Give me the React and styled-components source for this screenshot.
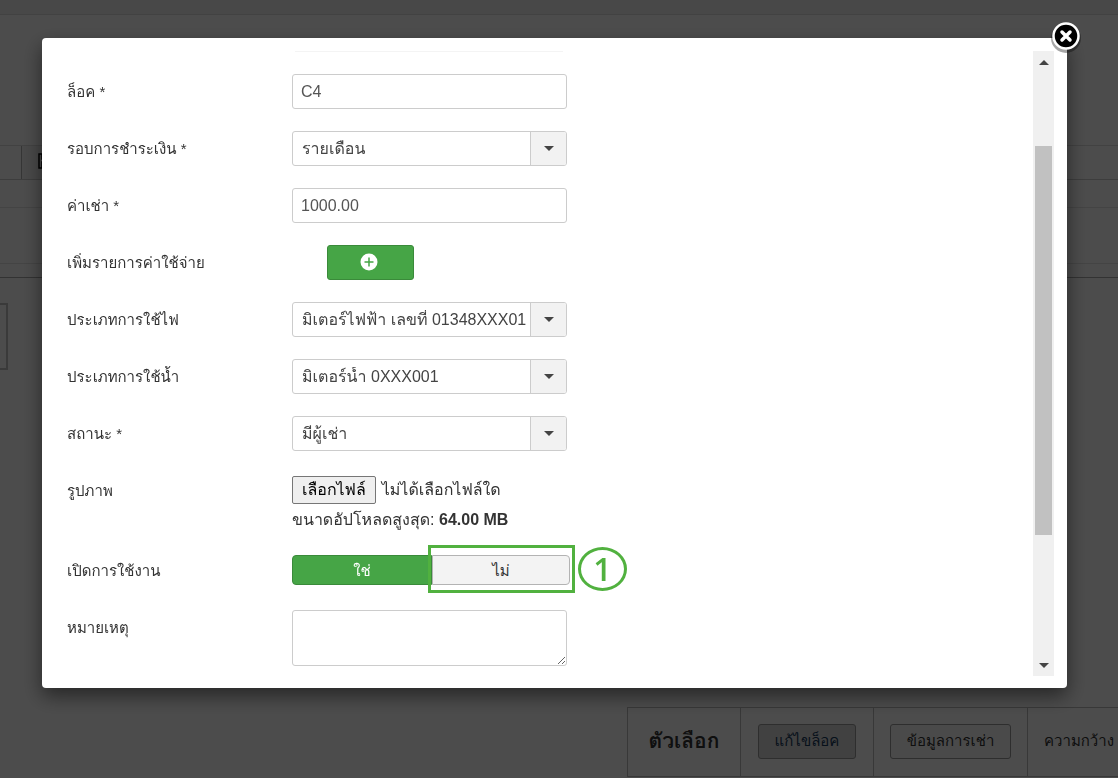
import React, { useState } from 'react';
import styled, { createGlobalStyle } from 'styled-components';

const GlobalStyle = createGlobalStyle`
  * {
    box-sizing: border-box;
  }
  body {
    margin: 0;
    overflow: hidden;
    background: #fff;
    color: #333;
    font-family: "Liberation Sans", Loma, Waree, Arial, sans-serif;
    font-size: 16px;
    line-height: 20px;
  }
  button, input, select, textarea {
    margin: 0;
    font: inherit;
  }
`;

/* ---- page behind the dialog ---- */

const Page = styled.div`
  display: flex;
  flex-direction: column;
  height: 100vh;
  overflow: hidden;
`;

const TopBar = styled.div`
  flex: none;
  height: 15px;
  background: #f0f0f0;
  border-bottom: 1px solid #ddd;
`;

const SearchBar = styled.div`
  display: flex;
  flex: none;
  height: 35px;
  margin-top: 130px;
  border-top: 1px solid #ddd;
  border-bottom: 1px solid #ccc;
`;

const SearchInput = styled.input`
  width: 21px;
  border: 0;
  padding: 0;
`;

const SaveButton = styled.button`
  width: 88px;
  padding: 0 0 4px 16px;
  border: 1px solid #b3b3b3;
  border-width: 0 1px;
  background: #f3f3f3;
  text-align: left;
  svg {
    display: block;
  }
`;

const Band = styled.div`
  flex: none;
  height: ${props => props.height}px;
  border-bottom: 1px solid ${props => (props.strong ? '#aaa' : '#e4e4e4')};
`;

const SidePanel = styled.div`
  flex: none;
  width: 8px;
  height: 67px;
  margin-top: 25px;
  border: 2px solid #c4c4c4;
  border-left: 0;
`;

const OptionTable = styled.table`
  width: 491px;
  height: 70px;
  margin: auto 0 1px auto;
  flex: none;
  table-layout: fixed;
  border-collapse: collapse;
  font-size: 15px;
  th, td {
    padding: 0 0 2px;
    border: 1px solid #bbb;
    text-align: center;
    white-space: nowrap;
  }
  th {
    width: 113px;
    font-size: 21px;
  }
  td:last-child {
    padding-left: 16px;
    border-right: 0;
    text-align: left;
  }
`;

const OptionButton = styled.button`
  height: 35px;
  padding: 0 16px;
  border: 1px solid #999;
  border-radius: 3px;
  background: ${props => (props.active ? '#d9d9d9' : '#f8f8f8')};
  color: ${props => (props.active ? '#1a3b5c' : '#333')};
`;

/* ---- dialog ---- */

const Overlay = styled.div`
  position: fixed;
  inset: 0;
  display: flex;
  padding: 38px 51px 90px 42px;
  background: rgba(0, 0, 0, 0.7);
`;

const Dialog = styled.div`
  position: relative;
  display: flex;
  flex: 1;
  padding: 13px 13px 12px 25px;
  border-radius: 4px;
  background: #fff;
  box-shadow: 0 8px 20px rgba(0, 0, 0, 0.5);
`;

const CloseButton = styled.button`
  position: absolute;
  top: -18px;
  right: -16px;
  width: 34px;
  height: 34px;
  padding: 0;
  border: 0;
  background: none;
  svg {
    display: block;
  }
`;

const Form = styled.form`
  display: flex;
  flex: 1;
  flex-direction: column;
  gap: 22px;
  min-width: 0;
  overflow: hidden;
`;

const FieldEnd = styled.div`
  flex: none;
  width: 268px;
  height: 1px;
  margin-left: 228px;
  background: #f4f4f4;
`;

const Row = styled.div`
  display: flex;
  flex: none;
  min-height: ${props => props.height || 35}px;
`;

const Label = styled.label`
  flex: none;
  width: 225px;
  padding-top: ${props => (props.compact ? 6 : 8)}px;
  font-size: 15px;
`;

const Control = styled.div`
  width: 275px;
`;

const TextInput = styled.input`
  display: block;
  width: 100%;
  height: 35px;
  padding: 0 8px;
  border: 1px solid #ccc;
  border-radius: 3px;
  background: #fff;
  color: #555;
`;

const SelectBox = styled.div`
  position: relative;
`;

const Select = styled.select`
  display: block;
  width: 100%;
  height: 35px;
  padding: 0 38px 0 9px;
  border: 1px solid #ccc;
  border-radius: 3px;
  background: #fff;
  color: #444;
  appearance: none;
`;

const SelectArrow = styled.span`
  position: absolute;
  top: 1px;
  right: 1px;
  bottom: 1px;
  display: flex;
  align-items: center;
  justify-content: center;
  width: 36px;
  border-left: 1px solid #ccc;
  border-radius: 0 2px 2px 0;
  background: #f2f2f2;
  pointer-events: none;
`;

const Caret = styled.span`
  border: 5px solid transparent;
  border-top-color: ${props => (props.up ? 'transparent' : '#444')};
  border-bottom-color: ${props => (props.up ? '#444' : 'transparent')};
  border-top-width: ${props => (props.up ? 0 : 5)}px;
  border-bottom-width: ${props => (props.up ? 5 : 0)}px;
`;

const AddButton = styled.button`
  display: flex;
  align-items: center;
  justify-content: center;
  width: 87px;
  height: 35px;
  margin-left: 35px;
  padding: 0 4px 2px 0;
  border: 1px solid #3a8a3a;
  border-radius: 3px;
  background: #46a546;
`;

const HiddenInput = styled.input`
  position: absolute;
  width: 1px;
  height: 1px;
  opacity: 0;
`;

const FileLine = styled.div`
  display: flex;
  align-items: center;
  gap: 6px;
  margin-top: 3px;
  white-space: nowrap;
`;

const FileButton = styled.label`
  height: 28px;
  padding: 3px 9px;
  border: 1px solid #767676;
  border-radius: 2px;
  background: #efefef;
  color: #000;
`;

const FileHint = styled.div`
  margin-top: 6px;
`;

const Switch = styled.div`
  display: flex;
  flex: none;
  align-items: flex-start;
  width: 278px;
`;

const SwitchOption = styled.label`
  flex: 1;
  height: 30px;
  padding-top: 5px;
  border: 1px solid ${props => (props.active ? '#3a8a3a' : '#b3b3b3')};
  border-radius: ${props => (props.active ? '4px 0 0 4px' : '0 4px 4px 0')};
  background: ${props => (props.active ? '#46a546' : '#f3f3f3')};
  color: ${props => (props.active ? '#fff' : '#333')};
  font-size: 15px;
  text-align: center;
`;

const NoOption = styled.div`
  position: relative;
  display: flex;
  flex: 1;
`;

const Highlight = styled.span`
  position: absolute;
  inset: -10px -5px -8px -4px;
  border: 3px solid #51b13f;
  pointer-events: none;
`;

const StepNumber = styled.span`
  position: absolute;
  top: -8px;
  left: calc(100% + 8px);
  width: 49px;
  height: 44px;
  border: 3px solid #51b13f;
  border-radius: 50%;
  color: #51b13f;
  font-family: "Open Sans", sans-serif;
  font-size: 32px;
  font-weight: 600;
  line-height: 38px;
  text-align: center;
`;

const Remark = styled.textarea`
  display: block;
  width: 100%;
  height: 56px;
  border: 1px solid #ccc;
  border-radius: 3px;
  background: #fff;
`;

const Scrollbar = styled.div`
  display: flex;
  flex: none;
  flex-direction: column;
  width: 21px;
  padding: 0 2px;
  background: #f0f0f0;
`;

const ScrollEnd = styled.div`
  display: flex;
  align-items: center;
  justify-content: center;
  height: 22px;
`;

const ScrollPart = styled.div`
  flex: ${props => props.size};
  background: ${props => (props.thumb ? '#c1c1c1' : 'transparent')};
`;

const SelectField = ({ id, label, options }) => (
  <Row>
    <Label htmlFor={id}>{label}</Label>
    <Control>
      <SelectBox>
        <Select id={id}>
          {options.map(option => (
            <option key={option}>{option}</option>
          ))}
        </Select>
        <SelectArrow>
          <Caret />
        </SelectArrow>
      </SelectBox>
    </Control>
  </Row>
);

const TextField = ({ id, label, value }) => (
  <Row>
    <Label htmlFor={id}>{label}</Label>
    <Control>
      <TextInput id={id} type="text" defaultValue={value} />
    </Control>
  </Row>
);

const Background = () => (
  <Page>
    <TopBar />
    <SearchBar>
      <SearchInput type="text" aria-label="search" />
      <SaveButton type="button" aria-label="save">
        <svg width="16" height="16" viewBox="0 0 16 16">
          <path d="M1 1h10l4 4v10H1z M4 1v5h7V1 M4 15V9h8v6" fill="none" stroke="#000" strokeWidth="1.5" />
        </svg>
      </SaveButton>
    </SearchBar>
    <Band height={28} />
    <Band height={56} />
    <Band height={14} strong="true" />
    <SidePanel />
    <OptionTable>
      <colgroup>
        <col width="113" />
        <col width="133" />
        <col width="154" />
        <col />
      </colgroup>
      <tbody>
        <tr>
          <th scope="row">ตัวเลือก</th>
          <td><OptionButton type="button" active="true">แก้ไขล็อค</OptionButton></td>
          <td><OptionButton type="button">ข้อมูลการเช่า</OptionButton></td>
          <td>ความกว้าง</td>
        </tr>
      </tbody>
    </OptionTable>
  </Page>
);

const App = () => {
  const [enabled, setEnabled] = useState(true);

  return (
    <>
      <GlobalStyle />
      <Background />
      <Overlay>
        <Dialog role="dialog">
          <Form>
            <FieldEnd />
            <TextField id="lock" label="ล็อค *" value="C4" />
            <SelectField id="period" label="รอบการชำระเงิน *" options={['รายเดือน']} />
            <TextField id="rent" label="ค่าเช่า *" value="1000.00" />
            <Row>
              <Label htmlFor="add">เพิ่มรายการค่าใช้จ่าย</Label>
              <Control>
                <AddButton id="add" type="button">
                  <svg width="18" height="18" viewBox="0 0 18 18">
                    <circle cx="9" cy="9" r="8.5" fill="#fff" />
                    <path d="M9 4.5v9M4.5 9h9" stroke="#46a546" strokeWidth="1.5" />
                  </svg>
                </AddButton>
              </Control>
            </Row>
            <SelectField id="electric" label="ประเภทการใช้ไฟ" options={['มิเตอร์ไฟฟ้า เลขที่ 01348XXX01']} />
            <SelectField id="water" label="ประเภทการใช้น้ำ" options={['มิเตอร์น้ำ 0XXX001']} />
            <SelectField id="status" label="สถานะ *" options={['มีผู้เช่า']} />
            <Row height={60}>
              <Label htmlFor="picture">รูปภาพ</Label>
              <Control>
                <FileLine>
                  <HiddenInput id="picture" type="file" />
                  <FileButton htmlFor="picture">เลือกไฟล์</FileButton>
                  <span>ไม่ได้เลือกไฟล์ใด</span>
                </FileLine>
                <FileHint>
                  ขนาดอัปโหลดสูงสุด: <b>64.00 MB</b>
                </FileHint>
              </Control>
            </Row>
            <Row height={33}>
              <Label as="span" id="enabled" compact="true">เปิดการใช้งาน</Label>
              <Switch role="radiogroup" aria-labelledby="enabled">
                <HiddenInput id="yes" type="radio" name="enabled" checked={enabled} onChange={() => setEnabled(true)} />
                <SwitchOption htmlFor="yes" active="true">ใช่</SwitchOption>
                <NoOption>
                  <HiddenInput id="no" type="radio" name="enabled" checked={!enabled} onChange={() => setEnabled(false)} />
                  <SwitchOption htmlFor="no">ไม่</SwitchOption>
                  <Highlight />
                  <StepNumber>1</StepNumber>
                </NoOption>
              </Switch>
            </Row>
            <Row height={56}>
              <Label htmlFor="remark">หมายเหตุ</Label>
              <Control>
                <Remark id="remark" />
              </Control>
            </Row>
          </Form>
          <Scrollbar>
            <ScrollEnd><Caret up="true" /></ScrollEnd>
            <ScrollPart size={73} />
            <ScrollPart size={389} thumb="true" />
            <ScrollPart size={119} />
            <ScrollEnd><Caret /></ScrollEnd>
          </Scrollbar>
          <CloseButton type="button" aria-label="close">
            <svg width="34" height="34" viewBox="0 0 34 34">
              <circle cx="17" cy="18" r="15" fill="#000" opacity="0.35" />
              <circle cx="17" cy="16" r="12.5" fill="#000" stroke="#fff" strokeWidth="2.5" />
              <path d="M13 12l8 8M21 12l-8 8" stroke="#fff" strokeWidth="3.5" strokeLinecap="round" />
            </svg>
          </CloseButton>
        </Dialog>
      </Overlay>
    </>
  );
};

export default App;
